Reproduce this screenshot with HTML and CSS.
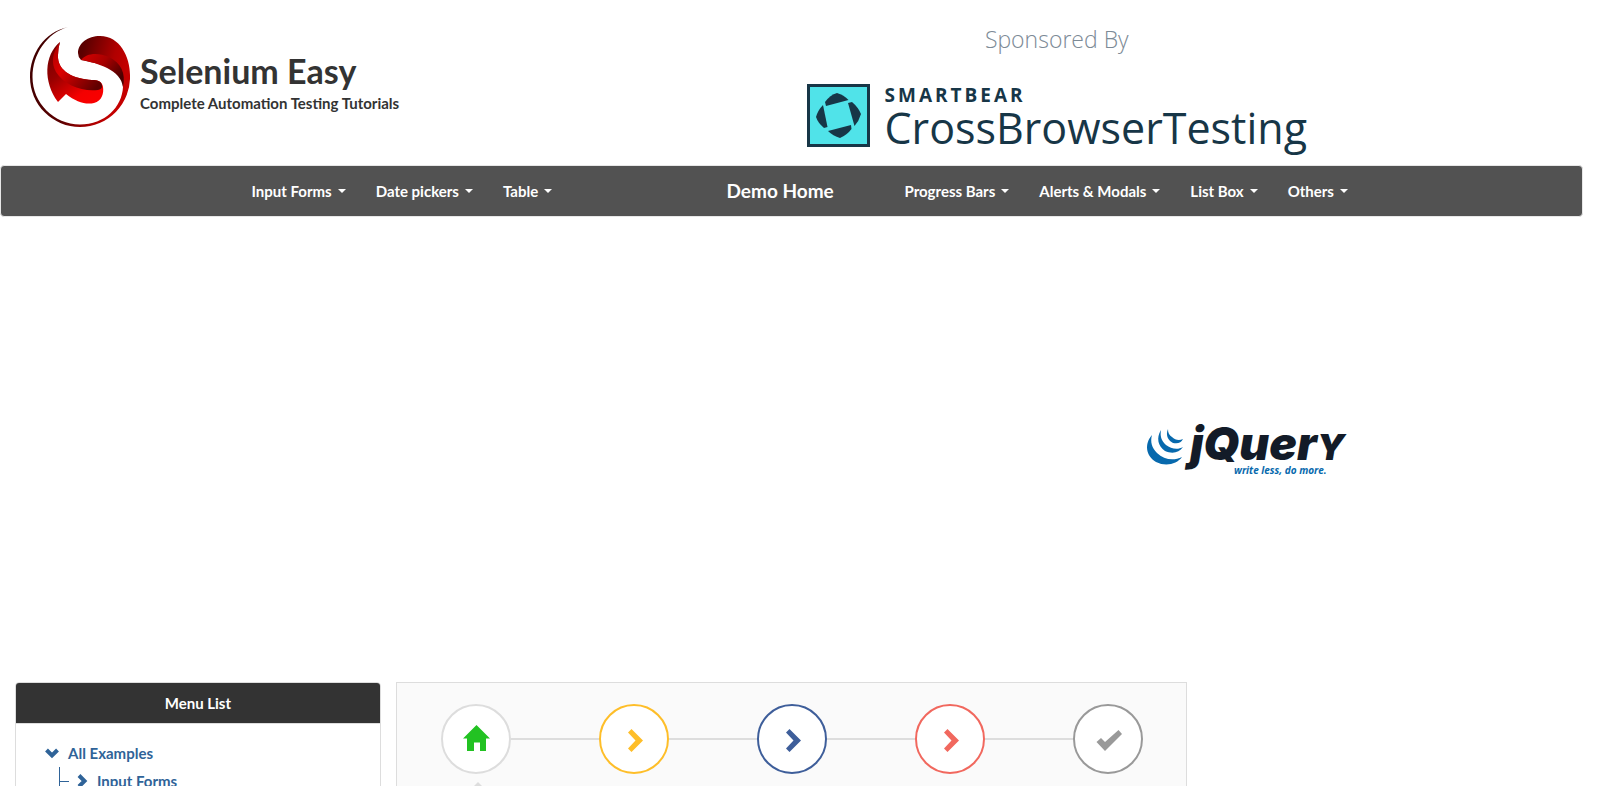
FILE: index.html
```html
<!DOCTYPE html>
<html lang="en">
<head>
<meta charset="utf-8">
<meta name="viewport" content="width=device-width, initial-scale=1">
<title>Selenium Easy - Demo Home</title>
<link rel="stylesheet" href="styles.css">
</head>
<body>
<header class="header">
  <a class="brand" href="#">
    <svg class="brand-logo" viewBox="0 0 100 100" aria-hidden="true">
      <defs>
        <linearGradient id="ring" x1="0" y1="0" x2="1" y2="0.3">
          <stop offset="0" stop-color="#3a0000"/><stop offset="0.55" stop-color="#5c0000"/><stop offset="0.85" stop-color="#b00000"/><stop offset="1" stop-color="#c40000"/>
        </linearGradient>
        <linearGradient id="fold" x1="0" y1="0" x2="1" y2="0.6">
          <stop offset="0" stop-color="#d80000"/><stop offset="0.5" stop-color="#a80000"/><stop offset="1" stop-color="#4a0000"/>
        </linearGradient>
        <linearGradient id="lower" x1="0" y1="0" x2="0.7" y2="1">
          <stop offset="0" stop-color="#6a0000"/><stop offset="0.45" stop-color="#980000"/><stop offset="0.85" stop-color="#f40000"/><stop offset="1" stop-color="#f80000"/>
        </linearGradient>
        <linearGradient id="sweep" x1="0" y1="0" x2="1" y2="0.8">
          <stop offset="0" stop-color="#a80000"/><stop offset="0.4" stop-color="#dc0000"/><stop offset="1" stop-color="#600000"/>
        </linearGradient>
      </defs>
      <path fill="url(#ring)" d="M38 0C14 5 0 27 0 50A50 50 0 0 0 50 100A50 50 0 0 0 100 48C100 30 90 9 70 9C58 9 48 16 48 26Q48 30 51 33C65 36 93 40 93 60C92 80 75 97.500 50 97.500C24 97.500 2.500 76 2.500 50C2.500 27 17 6 38 0Z"/>
      <path fill="url(#fold)" d="M51 33C56 26 68 25 79 30C91 36 96 46 93 60C91 43 68 36 51 33Z"/>
      <path fill="url(#lower)" d="M30 15C14 28 13 55 28 75L36 67C46 75 56 78 64 76C72 74 74 66 73 60C72 54 68 53 62 53C45 52 27 45 28 28Q28 21 30 15Z"/>
      <path fill="url(#sweep)" d="M30 15C22 26 21 36 26 45C34 58 52 65 68 63Q73 62 72 58C71 54 67 53 62 53C45 52 27 45 28 28Q28 21 30 15Z"/>
    </svg>
    <span class="brand-text">
      <span class="brand-name">Selenium Easy</span>
      <span class="brand-tag">Complete Automation Testing Tutorials</span>
    </span>
  </a>
  <div class="sponsor">
    <span class="sponsor-label">Sponsored By</span>
    <a class="cbt" href="#">
      <svg class="cbt-mark" viewBox="0 0 63 63" aria-hidden="true">
        <rect x="1.500" y="1.500" width="60" height="60" fill="#50e3e9" stroke="#173647" stroke-width="3"/>
        <g fill="#173647">
          <path d="M19 22L18 18Q23 11 30 9Q37 11 41.500 16Z"/>
          <path d="M41 19L45 18Q51 23 54 30Q52 37 47.500 42Z"/>
          <path d="M21 47L44 41L44.500 45Q40 51 33 54Q26 52 21 47Z"/>
          <path d="M16 21L20.500 43L17 44Q11 39 9 33Q11 26 16 21Z"/>
        </g>
      </svg>
      <span class="cbt-text">
        <span class="cbt-owner">SMARTBEAR</span>
        <span class="cbt-name">CrossBrowserTesting</span>
      </span>
    </a>
  </div>
</header>

<nav class="navbar" aria-label="Main">
  <div class="navbar-inner">
    <ul class="nav">
      <li><a href="#">Input Forms <i class="caret"></i></a></li>
      <li><a href="#">Date pickers <i class="caret"></i></a></li>
      <li><a href="#">Table <i class="caret"></i></a></li>
    </ul>
    <a class="nav-home" href="#">Demo Home</a>
    <ul class="nav">
      <li><a href="#">Progress Bars <i class="caret"></i></a></li>
      <li><a href="#">Alerts &amp; Modals <i class="caret"></i></a></li>
      <li><a href="#">List Box <i class="caret"></i></a></li>
      <li><a href="#">Others <i class="caret"></i></a></li>
    </ul>
  </div>
</nav>

<section class="banner">
  <a href="#" aria-label="jQuery">
    <svg class="jquery" viewBox="0 0 204 52">
      <g fill="#0769ad">
        <path d="M5 9C-3 18 -1 30 9 36C19 41 30 38 35 31C27 35 17 34 10 27C5 22 3 16 5 9Z"/>
        <path d="M14 4C9 12 11 20 18 25C25 28 32 27 36 21C31 24 24 23 19 19C14 14 13 10 14 4Z"/>
        <path d="M21 3C18 10 22 15 26 17C31 18 34 17 36 13C32 15 28 14 25 11C22 9 21 7 21 3Z"/>
      </g>
      <text class="jq-name" x="43" y="34">jQuer<tspan class="jq-end">y</tspan></text>
      <text class="jq-tag" x="87" y="48">write less, do more.</text>
    </svg>
  </a>
</section>

<main class="columns">
  <aside class="side">
    <section class="panel">
      <h2 class="panel-head">Menu List</h2>
      <ul class="tree">
        <li>
          <a href="#"><svg class="tree-icon" viewBox="0 0 14 14" aria-hidden="true"><path d="M1.500 4L7 9.500L12.500 4" fill="none" stroke="currentColor" stroke-width="4"/></svg>All Examples</a>
          <ul class="branch">
            <li><a href="#"><svg class="tree-icon" viewBox="0 0 14 14" aria-hidden="true"><path d="M3 1.500L8.500 7L3 12.500" fill="none" stroke="currentColor" stroke-width="4"/></svg>Input Forms</a></li>
          </ul>
        </li>
      </ul>
    </section>
  </aside>
  <section class="board">
    <div class="steps">
      <a class="step step-home" href="#" aria-label="Home"><svg viewBox="0 0 28 28"><path fill="currentColor" d="M14.500 0L28 13.500H24V26H18V17.500H12V26H5V13.500H1Z"/></svg></a>
      <span class="link"></span>
      <a class="step step-basic" href="#" aria-label="Basic"><svg viewBox="0 0 28 28"><path fill="currentColor" d="M11.500 4L23 15.500L11.500 27L8 23.500L15.500 15.500L8 7.500Z"/></svg></a>
      <span class="link"></span>
      <a class="step step-middle" href="#" aria-label="Intermediate"><svg viewBox="0 0 28 28"><path fill="currentColor" d="M11.500 4L23 15.500L11.500 27L8 23.500L15.500 15.500L8 7.500Z"/></svg></a>
      <span class="link"></span>
      <a class="step step-advanced" href="#" aria-label="Advanced"><svg viewBox="0 0 28 28"><path fill="currentColor" d="M11.500 4L23 15.500L11.500 27L8 23.500L15.500 15.500L8 7.500Z"/></svg></a>
      <span class="link"></span>
      <a class="step step-done" href="#" aria-label="Completed"><svg viewBox="0 0 28 28"><path fill="currentColor" d="M24.500 5L28 9L11 26L2.500 17L7 13L11 17Z"/></svg></a>
    </div>
  </section>
</main>
</body>
</html>
```
FILE: styles.css
```css
* {
  box-sizing: border-box;
}

body {
  margin: 0;
  height: 100vh;
  padding-right: 17px;
  overflow: hidden;
  background: #fff;
  color: #333;
  font: 700 15px/20px Lato, "Open Sans", sans-serif;
}

a {
  color: inherit;
  text-decoration: none;
}

ul {
  margin: 0;
  padding: 0;
  list-style: none;
}

.header {
  display: grid;
  grid-template-columns: 1fr 1fr;
  min-height: 165px;
}

.brand {
  display: flex;
  align-items: flex-start;
  gap: 10px;
  padding: 27px 0 0 30px;
}

.brand-logo {
  width: 100px;
  height: 100px;
}

.brand-text {
  display: flex;
  flex-direction: column;
  padding-top: 24px;
}

.brand-name {
  font-size: 34px;
  line-height: 40px;
}

.brand-tag {
  font-size: 15px;
  line-height: 24px;
}

.sponsor {
  display: flex;
  flex-direction: column;
  align-items: center;
  justify-self: start;
  padding: 23px 15px 0;
  font-family: "Open Sans", sans-serif;
}

.sponsor-label {
  color: #7c8a96;
  font-size: 23px;
  font-weight: 300;
  line-height: 32px;
}

.cbt {
  display: flex;
  gap: 15px;
  padding-top: 29px;
  color: #173647;
}

.cbt-mark {
  width: 63px;
  height: 63px;
}

.cbt-text {
  display: flex;
  flex-direction: column;
}

.cbt-owner {
  font-size: 19px;
  font-weight: 700;
  line-height: 22px;
  letter-spacing: 3px;
}

.cbt-name {
  font-size: 43px;
  font-weight: 400;
  line-height: 44px;
}

.navbar {
  border: 1px solid #e7e7e7;
  border-radius: 4px;
  background: #525252;
  color: #fff;
}

.navbar-inner {
  display: grid;
  grid-template-columns: 475px 178px 1fr;
  max-width: 1124px;
  margin: 0 auto;
  padding: 0 7px;
}

.nav {
  display: flex;
}

.nav a {
  display: flex;
  align-items: center;
  gap: 6px;
  padding: 15px;
  white-space: nowrap;
}

.caret {
  border: 4px solid transparent;
  border-top-color: #fff;
  border-bottom: 0;
}

.nav-home {
  padding: 15px;
  font-size: 19px;
}

.banner {
  display: flex;
  justify-content: flex-end;
  padding: 209px 232px 0 0;
  min-height: 465px;
}

.jquery {
  display: block;
  width: 204px;
  height: 52px;
  overflow: visible;
}

.jq-name {
  fill: #131b28;
  font: italic 900 46px Inter, sans-serif;
}

.jq-end {
  font-size: 36px;
  text-transform: uppercase;
}

.jq-tag {
  fill: #0769ad;
  font: italic 700 10px "Open Sans", sans-serif;
}

.columns {
  display: grid;
  grid-template-columns: 1fr 2fr 1fr;
}

.side {
  padding: 0 15px;
}

.panel {
  border: 1px solid #ddd;
  border-radius: 4px;
  min-height: 240px;
}

.panel-head {
  margin: 0;
  padding: 10px;
  border-bottom: 1px solid #ddd;
  border-radius: 3px 3px 0 0;
  background: #333;
  color: #fff;
  font-size: 15px;
  line-height: 20px;
  text-align: center;
}

.tree {
  padding: 15px 29px;
  color: #2f6398;
}

.tree a {
  display: flex;
  align-items: center;
  gap: 9px;
  line-height: 28px;
}

.tree-icon {
  width: 14px;
  height: 14px;
}

.branch {
  margin-left: 14px;
  border-left: 1px solid #2f6398;
}

.branch a::before {
  content: "";
  width: 9px;
  border-top: 1px solid #2f6398;
}

.branch a {
  gap: 7px;
}

.board {
  padding: 21px 43px 21px 44px;
  border: 1px solid #ddd;
  background: #fafafa;
}

.steps {
  display: flex;
  align-items: center;
}

.link {
  flex: 1;
  height: 2px;
  background: #ddd;
}

.step {
  position: relative;
  display: flex;
  align-items: center;
  justify-content: center;
  width: 70px;
  height: 70px;
  border: 2px solid currentColor;
  border-radius: 50%;
  background: #fff;
}

.step svg {
  width: 28px;
  height: 28px;
}

.step-home {
  border-color: #ddd;
  color: #22c222;
}

.step-home::after {
  content: "";
  position: absolute;
  top: 76px;
  left: 25px;
  border: 10px solid transparent;
  border-top: 0;
  border-bottom-color: #ddd;
}

.step-basic {
  color: #febe29;
}

.step-middle {
  color: #3e5e9a;
}

.step-advanced {
  color: #f1685e;
}

.step-done {
  color: #999;
}
```
